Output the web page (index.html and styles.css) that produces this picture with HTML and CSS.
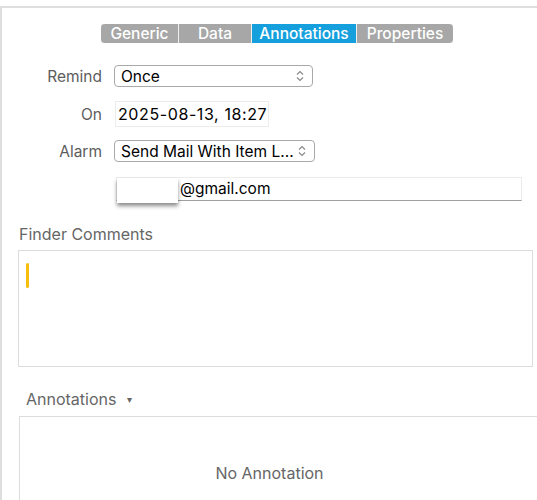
FILE: index.html
```html
<!DOCTYPE html>
<html lang="en">
<head>
    <meta charset="UTF-8">
    <meta name="viewport" content="width=device-width, initial-scale=1.0">
    <title>Annotations</title>
    <link rel="stylesheet" href="styles.css">
</head>
<body>

<div class="panel">
    <!-- segmented tabs -->
    <div class="tabs">
        <span class="tab tab-generic">Generic</span>
        <span class="tab tab-data">Data</span>
        <span class="tab tab-annotations active">Annotations</span>
        <span class="tab tab-properties">Properties</span>
    </div>

    <div class="form">
        <div class="row row-remind">
            <label class="label">Remind</label>
            <div class="popup popup-remind">
                <span>Once</span>
                <svg class="arrows" width="8" height="12" viewBox="0 0 8 12"><path d="M1 4.5 L4 1.5 L7 4.5 M1 7.5 L4 10.5 L7 7.5" fill="none" stroke="#8a8a8a" stroke-width="1.2"/></svg>
            </div>
        </div>
        <div class="row row-on">
            <label class="label">On</label>
            <div class="datefield">2025-08-13, 18:27</div>
        </div>
        <div class="row row-alarm">
            <label class="label">Alarm</label>
            <div class="popup popup-alarm">
                <span>Send Mail With Item L...</span>
                <svg class="arrows" width="8" height="12" viewBox="0 0 8 12"><path d="M1 4.5 L4 1.5 L7 4.5 M1 7.5 L4 10.5 L7 7.5" fill="none" stroke="#8a8a8a" stroke-width="1.2"/></svg>
            </div>
        </div>
        <div class="row row-email">
            <span class="label"></span>
            <div class="emailfield">
                <div class="redact"></div>
                <span class="email-text">@gmail.com</span>
            </div>
        </div>
    </div>

    <div class="section-title">Finder Comments</div>
    <div class="comments">
        <div class="caret"></div>
    </div>

    <div class="section-title annotations-title">Annotations <span class="triangle">&#9662;</span></div>
    <div class="annotations">
        <div class="empty">No Annotation</div>
    </div>
</div>

</body>
</html>
```

FILE: styles.css
```css
html, body {
    height: 500px;
}
body {
    margin: 0;
    padding: 0;
    background-color: #fff;
    font-family: Inter, "Liberation Sans", sans-serif;
    color: #000;
    overflow: hidden;
}

.panel {
    margin-top: 6px;
    height: 494px;
    box-sizing: border-box;
    overflow: hidden;
    border-top: 2px solid #dedede;
    border-left: 2px solid #dedede;
}

/* segmented control */
.tabs {
    display: flex;
    margin: 16px 0 0 99px;
    width: 352px;
    height: 19px;
    gap: 1px;
    background-color: #f0f0f0;
}
.tab {
    display: flex;
    align-items: center;
    justify-content: center;
    background-color: #a7a7a7;
    color: #fff;
    font-size: 15.5px;
    font-weight: 500;
}
.tab-generic {
    width: 77px;
    border-radius: 4px 0 0 4px;
}
.tab-data {
    width: 72px;
}
.tab-annotations {
    width: 104px;
}
.tab-properties {
    width: 96px;
    border-radius: 0 4px 4px 0;
}
.tab.active {
    background-color: #15a0dd;
}

/* form rows */
.form {
    margin-top: 22px;
}
.row {
    display: flex;
    align-items: center;
}
.label {
    width: 100px;
    text-align: right;
    font-size: 15.5px;
    color: #5d5d5d;
    margin-right: 12px;
}
.popup {
    display: flex;
    align-items: center;
    justify-content: space-between;
    height: 22px;
    padding: 0 8px 0 6px;
    border: 1px solid #a9a9a9;
    border-radius: 4px;
    font-size: 15.5px;
    box-sizing: border-box;
}
.popup-remind {
    width: 199px;
}
.popup-alarm {
    width: 201px;
}
.row-on {
    margin-top: 14px;
}
.datefield {
    margin-left: 1px;
    width: 154px;
    height: 26px;
    box-sizing: border-box;
    border: 1px solid #ececec;
    padding: 0 2px;
    font-size: 16px;
    line-height: 24px;
    letter-spacing: 0.6px;
    white-space: nowrap;
}
.row-alarm {
    margin-top: 13px;
}
.row-email {
    margin-top: 15px;
}
.emailfield {
    position: relative;
    margin-left: 2px;
    width: 406px;
    height: 24px;
    box-sizing: border-box;
    border: 1px solid #ececec;
    border-bottom: 1px solid #a0a0a0;
    font-size: 15.5px;
    line-height: 22px;
}
.email-text {
    margin-left: 63px;
}
.redact {
    position: absolute;
    left: 0;
    top: 0;
    width: 61px;
    height: 25px;
    background-color: #fff;
    box-shadow: 0 3px 4px rgba(0, 0, 0, 0.45);
}

/* sections */
.section-title {
    margin: 23px 0 0 17px;
    font-size: 16px;
    color: #666;
}
.comments {
    margin: 6px 0 0 16px;
    width: 515px;
    height: 117px;
    box-sizing: border-box;
    border: 1px solid #dcdcdc;
    padding: 12px 0 0 7px;
}
.caret {
    width: 3px;
    height: 25px;
    border-radius: 2px;
    background-color: #f7be0c;
}
.annotations-title {
    margin: 22px 0 0 24px;
}
.triangle {
    font-size: 10px;
    margin-left: 6px;
    position: relative;
    top: -2px;
}
.annotations {
    margin: 7px 0 0 17px;
    height: 200px;
    border: 1px solid #dcdcdc;
    border-right: none;
}
.empty {
    margin-top: 46px;
    padding-right: 18px;
    text-align: center;
    font-size: 16px;
    color: #666;
}
```
